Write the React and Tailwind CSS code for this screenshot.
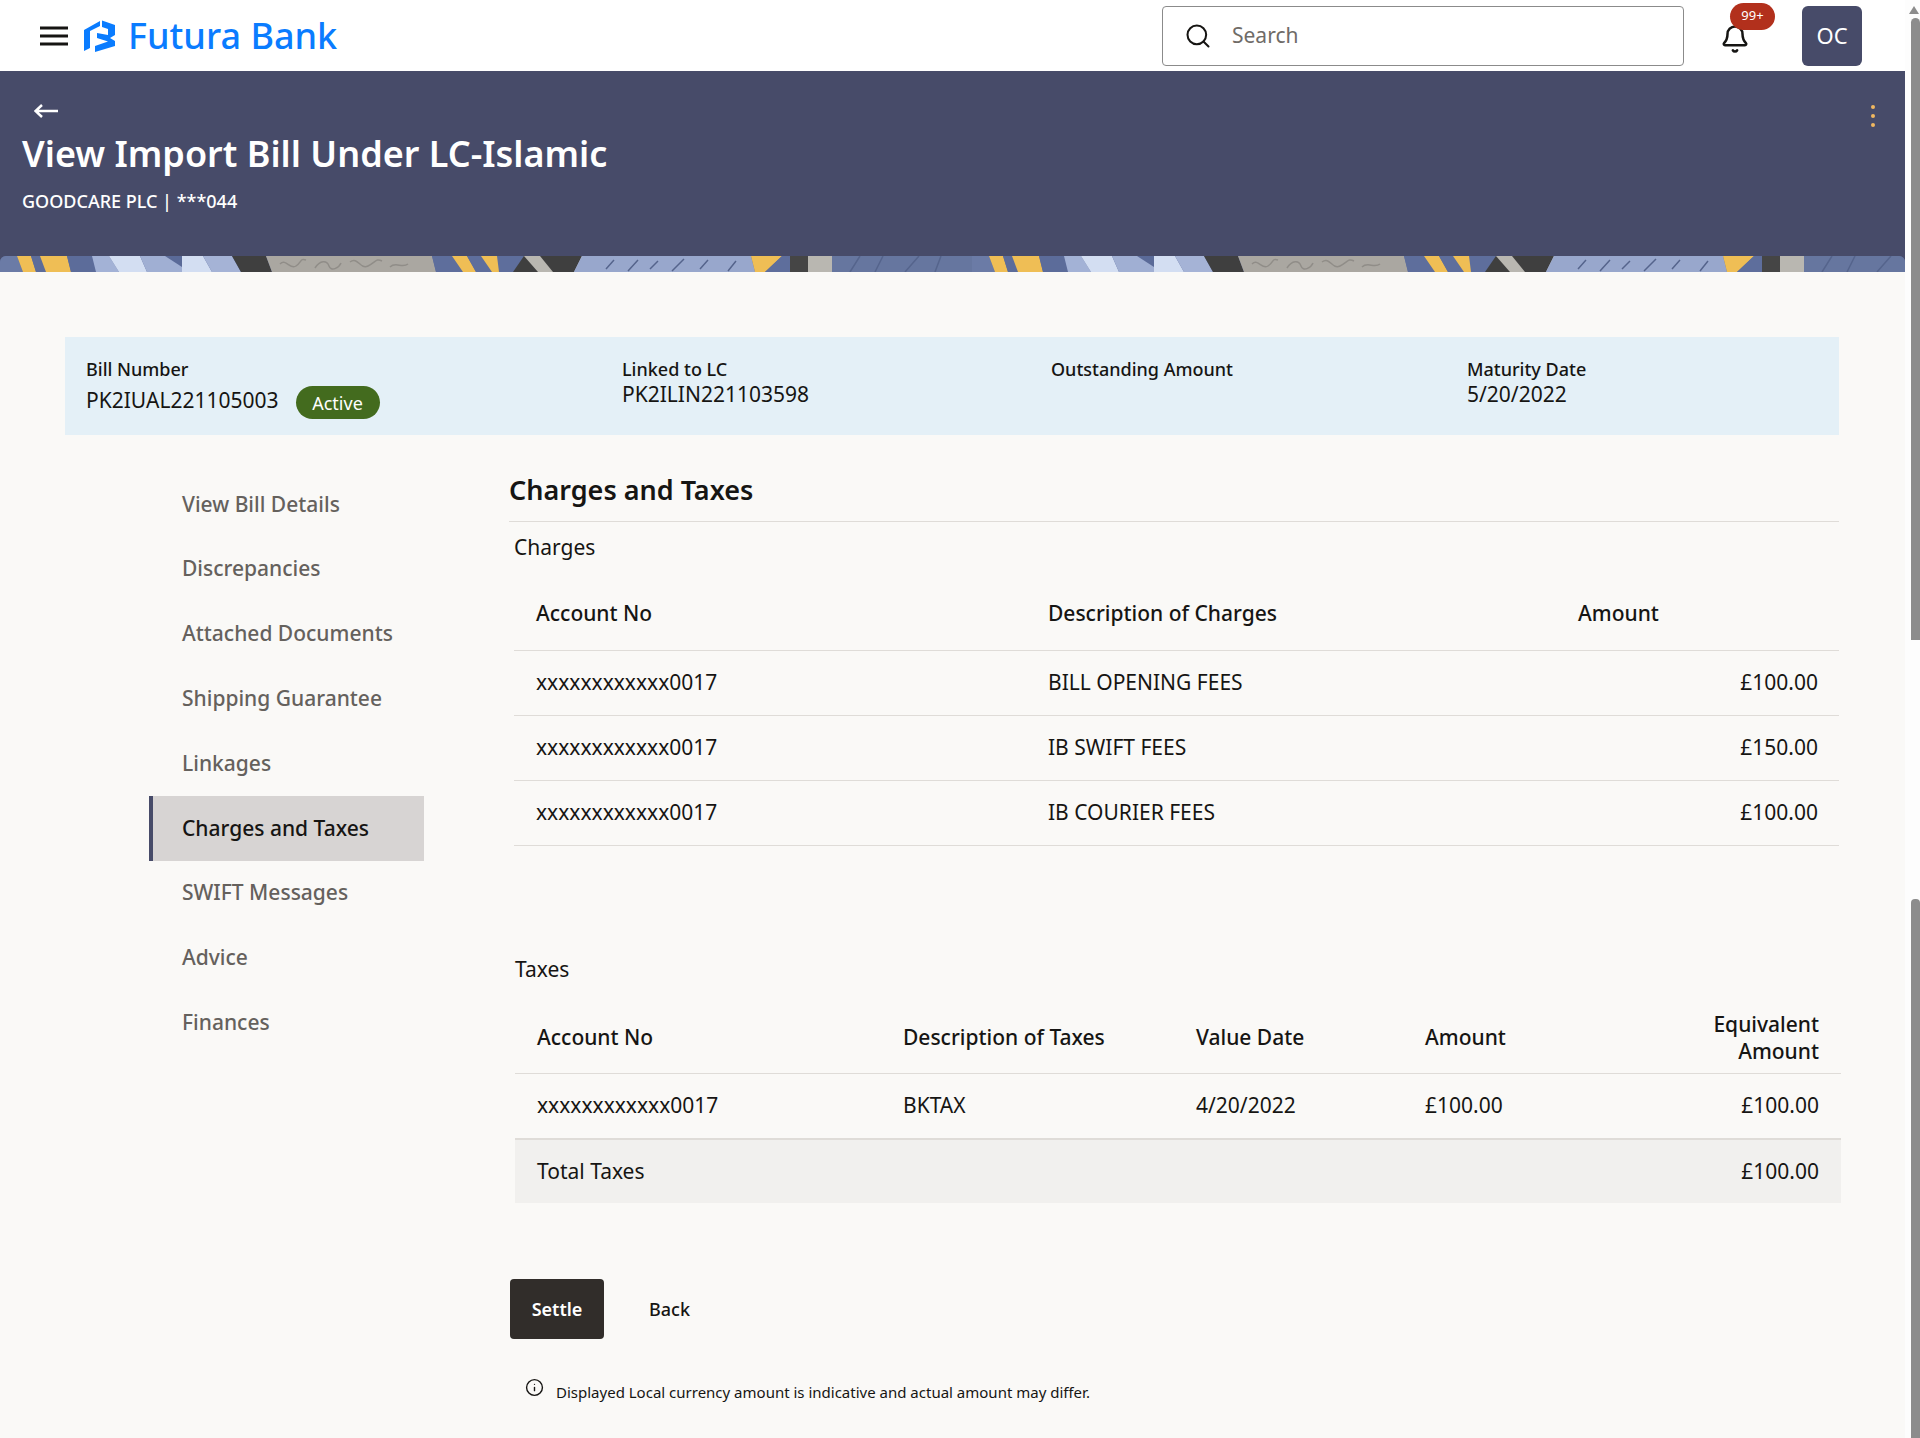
import { Bell, Info, Search } from 'lucide-react'

const sideItems = [
    'View Bill Details',
    'Discrepancies',
    'Attached Documents',
    'Shipping Guarantee',
    'Linkages',
    'Charges and Taxes',
    'SWIFT Messages',
    'Advice',
    'Finances',
]

const charges = [
    { account: 'xxxxxxxxxxxx0017', desc: 'BILL OPENING FEES', amount: '£100.00' },
    { account: 'xxxxxxxxxxxx0017', desc: 'IB SWIFT FEES', amount: '£150.00' },
    { account: 'xxxxxxxxxxxx0017', desc: 'IB COURIER FEES', amount: '£100.00' },
]

// one period of the banner strip: top-left, top-right, bottom-right, bottom-left x, colour
const stripShapes = [
    [0, 17, 23, 0, '#6b7ba6'],
    [17, 31, 36, 23, '#efbe55'],
    [31, 40, 46, 36, '#5c6c9a'],
    [40, 67, 71, 46, '#efbe55'],
    [67, 92, 96, 71, '#5c6c9a'],
    [92, 109, 119, 96, '#a3b2d6'],
    [109, 140, 147, 119, '#d3def2'],
    [140, 182, 182, 147, '#a0afd3'],
    [182, 203, 212, 182, '#d3def2'],
    [203, 232, 241, 212, '#a5b3d6'],
    [232, 266, 272, 241, '#3f3f3f'],
    [266, 432, 436, 272, '#aaa7a1'],
    [432, 452, 463, 436, '#5e6e9c'],
    [452, 467, 476, 463, '#efbe55'],
    [467, 524, 513, 476, '#5e6e9c'],
    [524, 582, 574, 513, '#3f3f3f'],
    [524, 540, 553, 538, '#b9b7b1'],
    [582, 600, 574, 574, '#b9b7b1'],
    [582, 751, 755, 574, '#98a7cc'],
    [751, 782, 765, 755, '#efbe55'],
    [782, 790, 790, 765, '#5e6e9c'],
    [790, 808, 808, 790, '#454545'],
    [808, 832, 832, 808, '#b9b7b1'],
    [832, 972, 972, 832, '#66769f'],
]

const BannerStrip = () => (
    <svg width="1905" height="16" className="block rounded-t-[6px] bg-[#5e6e9c]">
        {[0, 972].map(offset => (
            <g key={offset} transform={`translate(${offset} 0)`}>
                {stripShapes.map(([a, b, c, d, fill], i) => (
                    <polygon key={i} points={`${a},0 ${b},0 ${c},16 ${d},16`} fill={fill} />
                ))}
                <polygon points="165,0 182,0 182,11" fill="#5a6a98" />
                <polygon points="481,0 497,0 499,16 492,16" fill="#efbe55" />
                <path d="M280 8c6-6 10 6 16 2s4-8 10-6M315 12c5-8 12-8 14-2s10 2 12-3M350 6c8-6 10 8 18 4s8-8 14-5M390 11c6-6 12 2 18-3" stroke="#908d88" strokeWidth="1.5" fill="none" />
                <path d="M606 13l8-9M628 15l10-11M650 13l8-8M672 15l12-12M700 13l8-9M728 15l8-10M850 16l10-16M875 16l8-16M905 16l14-16M935 16l6-16" stroke="#55648c" strokeWidth="1.5" fill="none" />
            </g>
        ))}
    </svg>
)

const Logo = () => (
    <svg width="31" height="32" viewBox="0 0 31 32" fill="#0a7cff" className="ml-[16px]">
        <polygon points="0,10 16,1 16,6 6,11 6,28 0,31" />
        <polygon points="18,0.5 31,5 31,15 26,18 31,21 31,26 11,32 11,26 24,21.5 13,18 13,13 24,15 24,9 18,7" />
    </svg>
)

const Header = () => (
    <header className="h-[71px] bg-white flex items-center pl-[40px] pr-[43px]">
        <svg width="28" height="20" viewBox="0 0 28 20" stroke="#161513" strokeWidth="3">
            <path d="M0 2h28M0 10h28M0 18h28" />
        </svg>
        <Logo />
        <span className="ml-[13px] text-[36px] leading-none font-medium text-[#0a7cff]">Futura Bank</span>
        <div className="ml-auto w-[522px] h-[60px] border border-[#8b8b8b] rounded-[4px] bg-white flex items-center pl-[21px]">
            <Search size={28} strokeWidth={1.75} className="text-[#161513]" />
            <span className="ml-[20px] text-[21px] text-[#6f6b67]">Search</span>
        </div>
        <div className="relative ml-[36px] w-[30px] h-[30px] mt-[6px]">
            <Bell size={30} strokeWidth={2} className="text-[#161513]" />
            <span className="absolute left-[10px] top-[-21px] w-[45px] h-[27px] rounded-full bg-[#b2301c] text-white text-[13px] flex items-center justify-center">99+</span>
        </div>
        <div className="ml-[52px] w-[60px] h-[60px] rounded-[6px] bg-[#474b69] text-white text-[22px] flex items-center justify-center">OC</div>
    </header>
)

const Banner = () => (
    <div className="bg-[#474b69] text-white">
        <div className="h-[185px] pl-[22px] pr-[30px] pt-[33px] relative">
            <svg width="24" height="14" viewBox="0 0 24 14" fill="none" stroke="#fff" strokeWidth="2.5" className="ml-[12px]">
                <path d="M1 7h23M8 1L1.5 7 8 13" />
            </svg>
            <h1 className="mt-[14px] text-[36px] leading-[44px] font-semibold">View Import Bill Under LC-Islamic</h1>
            <p className="mt-[12px] text-[18px] leading-[26px] font-medium">GOODCARE PLC | ***044</p>
            <div className="absolute right-[30px] top-[34px] flex flex-col gap-[5px]">
                <span className="w-[4px] h-[4px] rounded-full bg-[#f0b860]" />
                <span className="w-[4px] h-[4px] rounded-full bg-[#f0b860]" />
                <span className="w-[4px] h-[4px] rounded-full bg-[#f0b860]" />
            </div>
        </div>
        <BannerStrip />
    </div>
)

const InfoStrip = () => (
    <div className="h-[98px] bg-[#e4f0f7] flex pt-[20px] text-[#161513]">
        <div className="w-[557px] pl-[21px]">
            <div className="text-[18px] leading-[24px] font-medium">Bill Number</div>
            <div className="flex items-center text-[21px] leading-[26px]">
                PK2IUAL221105003
                <span className="ml-[17px] mt-[5px] w-[84px] h-[33px] rounded-full bg-[#436b1e] text-white text-[18px] flex items-center justify-center">Active</span>
            </div>
        </div>
        <div className="w-[429px]">
            <div className="text-[18px] leading-[24px] font-medium">Linked to LC</div>
            <div className="text-[21px] leading-[26px]">PK2ILIN221103598</div>
        </div>
        <div className="w-[416px]">
            <div className="text-[18px] leading-[24px] font-medium">Outstanding Amount</div>
        </div>
        <div>
            <div className="text-[18px] leading-[24px] font-medium">Maturity Date</div>
            <div className="text-[21px] leading-[26px]">5/20/2022</div>
        </div>
    </div>
)

const Sidebar = () => (
    <nav className="w-[444px] shrink-0 pl-[84px] pt-[37px]">
        {sideItems.map(item => (
            <div
                key={item}
                className={`w-[275px] h-[64.8px] flex items-center text-[21px] ${
                    item === 'Charges and Taxes'
                        ? 'bg-[#d7d4d3] border-l-[4px] border-[#474b69] pl-[29px] font-medium text-[#161513]'
                        : 'pl-[33px] font-medium text-[#65615d]'
                }`}
            >
                {item}
            </div>
        ))}
    </nav>
)

const ChargesTable = () => (
    <div className="ml-[5px] text-[21px] text-[#161513]">
        <div className="grid grid-cols-[512px_530px_283px] h-[73px] items-center border-b border-[#dfdcd8] font-medium">
            <div className="pl-[22px]">Account No</div>
            <div className="pl-[22px]">Description of Charges</div>
            <div className="pl-[22px]">Amount</div>
        </div>
        {charges.map((row, i) => (
            <div key={i} className="grid grid-cols-[512px_530px_283px] h-[65px] items-center border-b border-[#dfdcd8]">
                <div className="pl-[22px]">{row.account}</div>
                <div className="pl-[22px]">{row.desc}</div>
                <div className="pr-[21px] text-right">{row.amount}</div>
            </div>
        ))}
    </div>
)

const TaxesTable = () => (
    <div className="ml-[6px] -mr-[2px] text-[21px] text-[#161513]">
        <div className="grid grid-cols-[366px_293px_229px_1fr] h-[72px] items-center border-b border-[#dfdcd8] font-medium">
            <div className="pl-[22px]">Account No</div>
            <div className="pl-[22px]">Description of Taxes</div>
            <div className="pl-[22px]">Value Date</div>
            <div className="pl-[22px] flex justify-between">
                <span>Amount</span>
            </div>
        </div>
    </div>
)

const Content = () => (
    <main className="flex-1 bg-[#faf9f7] pl-[65px] pr-[66px] pt-[65px]">
        <InfoStrip />
        <div className="flex">
            <Sidebar />
            <section className="flex-1 min-w-0 pt-[35px]">
                <h2 className="text-[27px] leading-[40px] font-semibold text-[#161513] border-b border-[#dfdcd8] pb-[11px]">Charges and Taxes</h2>
                <h3 className="ml-[5px] mt-[9px] text-[21px] leading-[32px] text-[#161513]">Charges</h3>
                <div className="mt-[15px]">
                    <ChargesTable />
                </div>
                <h3 className="ml-[6px] mt-[107px] text-[21px] leading-[32px] text-[#161513]">Taxes</h3>
                <div className="mt-[17px] ml-[6px] -mr-[2px] text-[21px] text-[#161513]">
                    <div className="grid grid-cols-[366px_293px_229px_1fr] h-[72px] items-center border-b border-[#dfdcd8] font-medium">
                        <div className="pl-[22px]">Account No</div>
                        <div className="pl-[22px]">Description of Taxes</div>
                        <div className="pl-[22px]">Value Date</div>
                        <div className="pl-[22px] pr-[22px] flex items-center justify-between">
                            <span>Amount</span>
                            <span className="text-right leading-[27px]">Equivalent<br />Amount</span>
                        </div>
                    </div>
                    <div className="grid grid-cols-[366px_293px_229px_1fr] h-[64px] items-center">
                        <div className="pl-[22px]">xxxxxxxxxxxx0017</div>
                        <div className="pl-[22px]">BKTAX</div>
                        <div className="pl-[22px]">4/20/2022</div>
                        <div className="pl-[22px] pr-[22px] flex justify-between">
                            <span>£100.00</span>
                            <span>£100.00</span>
                        </div>
                    </div>
                    <div className="h-[65px] bg-[#f1f0ee] border-t-2 border-[#dfdcd8] flex items-center justify-between px-[22px]">
                        <span>Total Taxes</span>
                        <span>£100.00</span>
                    </div>
                </div>
                <div className="mt-[76px] ml-[1px] flex items-center">
                    <button className="w-[94px] h-[60px] rounded-[4px] bg-[#312d2a] text-white text-[18px] font-semibold">Settle</button>
                    <button className="ml-[45px] text-[18px] font-medium text-[#161513]">Back</button>
                </div>
                <div className="mt-[39px] ml-[16px] flex items-start text-[#161513]">
                    <Info size={19} strokeWidth={1.75} />
                    <span className="ml-[12px] mt-[3px] text-[15px] leading-[22px]">Displayed Local currency amount is indicative and actual amount may differ.</span>
                </div>
            </section>
        </div>
    </main>
)

const ScrollGutter = () => (
    <div className="w-[15px] shrink-0 bg-[#fdfdfd] flex flex-col items-end">
        <svg width="10" height="8" viewBox="0 0 10 8" className="mt-[6px] mr-[1px]" fill="#8c8c8c">
            <path d="M5 0l5 8H0z" />
        </svg>
        <div className="mt-[4px] w-[9px] h-[622px] rounded-t-full rounded-b-[4px] bg-[#8c8c8c]" />
        <div className="mt-[259px] w-[9px] flex-1 rounded-t-[4px] bg-[#8c8c8c]" />
    </div>
)

export default function App() {
    return (
        <div className="w-[1920px] h-[1438px] overflow-hidden flex bg-white font-['Noto_Sans',sans-serif]">
            <div className="w-[1905px] flex flex-col">
                <Header />
                <Banner />
                <Content />
            </div>
            <ScrollGutter />
        </div>
    )
}
